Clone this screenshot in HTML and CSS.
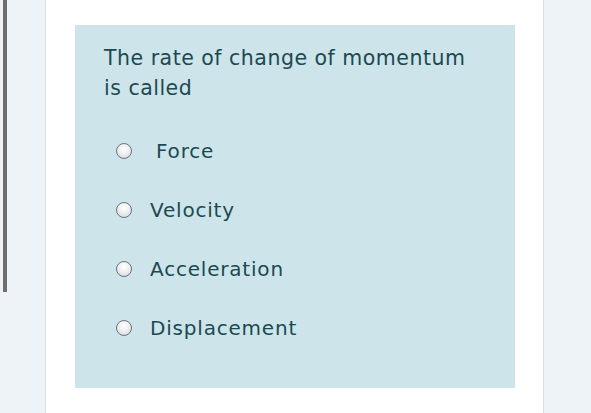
FILE: index.html
```html
<!DOCTYPE html>
<html>
<head>
<meta charset="utf-8">
<link rel="stylesheet" href="styles.css">
</head>
<body>
<div class="page">
  <div class="rail"><div class="bar"></div></div>
  <div class="card">
    <div class="quiz">
      <p class="question">The rate of change of momentum is called</p>
      <ul class="options">
        <li class="option"><span class="radio"></span><span class="label label-force">Force</span></li>
        <li class="option"><span class="radio"></span><span class="label">Velocity</span></li>
        <li class="option"><span class="radio"></span><span class="label">Acceleration</span></li>
        <li class="option"><span class="radio"></span><span class="label">Displacement</span></li>
      </ul>
    </div>
  </div>
  <div class="aside"></div>
</div>
</body>
</html>
```
FILE: styles.css
```css
* { box-sizing: border-box; }
html, body { margin: 0; padding: 0; }
body {
  background: #edf3f6;
  font-family: "DejaVu Sans", "Open Sans", sans-serif;
  width: 591px;
  height: 413px;
  overflow: hidden;
}
.page {
  display: flex;
  height: 413px;
}
.rail {
  width: 45px;
  flex: none;
  padding-left: 3px;
}
.bar {
  width: 4px;
  height: 292px;
  background: #6e6e6e;
}
.card {
  width: 499px;
  flex: none;
  background: #ffffff;
  border-left: 1px solid #d8dee1;
  border-right: 1px solid #d8dee1;
  padding-top: 25px;
  padding-left: 29px;
}
.aside { flex: 1; }
.quiz {
  width: 440px;
  height: 363px;
  background: #cde5ea;
  padding: 18px 20px 0 29px;
  color: #1c4951;
}
.question {
  margin: 0;
  font-size: 20.5px;
  line-height: 30px;
  letter-spacing: 0.5px;
  width: 380px;
}
.options {
  list-style: none;
  margin: 19px 0 0 0;
  padding: 0 0 0 12px;
}
.option {
  display: flex;
  align-items: center;
  height: 59px;
  font-size: 20px;
  letter-spacing: 0.8px;
}
.option:first-child { height: 58px; }
.radio {
  width: 16px;
  height: 16px;
  border-radius: 50%;
  border: 1.5px solid #6d7478;
  background: radial-gradient(circle at 50% 35%, #ffffff 0%, #e9ecee 55%, #c9cfd2 100%);
  flex: none;
  margin-right: 18px;
}
.label-force { margin-left: 6px; }
```
